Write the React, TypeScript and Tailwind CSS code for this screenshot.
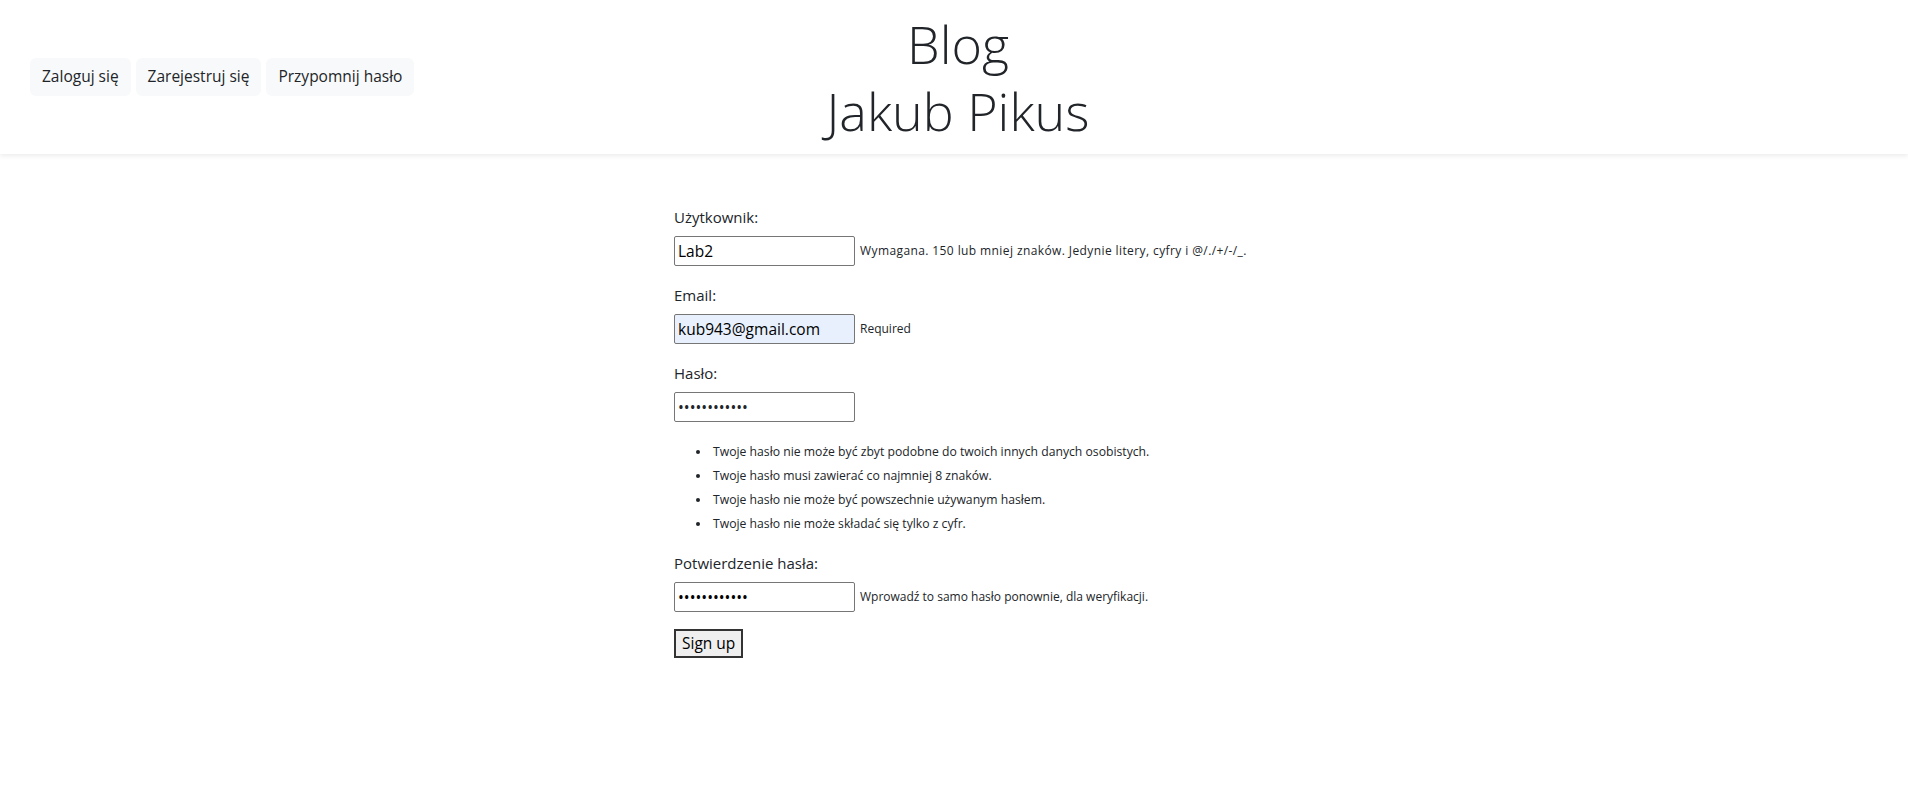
import React from 'react'

const font = { fontFamily: '"Open Sans", "Noto Sans", sans-serif' }

const rules = [
    'Twoje hasło nie może być zbyt podobne do twoich innych danych osobistych.',
    'Twoje hasło musi zawierać co najmniej 8 znaków.',
    'Twoje hasło nie może być powszechnie używanym hasłem.',
    'Twoje hasło nie może składać się tylko z cyfr.',
]

function Field({ label, value, type = 'text', help, helpClass = '', autofill }: { label: string; value: string; type?: string; help?: string; helpClass?: string; autofill?: boolean }) {
    return (
        <div className="mb-[17px]">
            <div className="text-[15px] leading-6 text-[#212529]">{label}</div>
            <div className="mt-[7px] flex items-center">
                <input
                    readOnly
                    type={type}
                    value={value}
                    className={`h-[30px] w-[181px] shrink-0 border border-[#767676] rounded-[2px] px-[3px] text-[15.5px] text-black outline-none ${autofill ? 'bg-[#e8f0fe]' : 'bg-white'}`}
                />
                {help && <span className={`ml-[5px] whitespace-nowrap text-[12px] text-[#212529] ${helpClass}`}>{help}</span>}
            </div>
        </div>
    )
}

export default function App() {
    return (
        <div className="min-h-screen bg-white text-[#212529]" style={font}>
            <header className="h-[154px] bg-white shadow-[0_2px_5px_rgba(0,0,0,0.08)] grid grid-cols-[1fr_auto_1fr] items-center px-[30px]">
                <nav className="flex gap-[5px]">
                    {['Zaloguj się', 'Zarejestruj się', 'Przypomnij hasło'].map((t) => (
                        <button key={t} className="h-[38px] px-3 rounded-[6px] bg-[#f8f9fa] text-[15.5px] text-[#212529]">
                            {t}
                        </button>
                    ))}
                </nav>
                <h1 className="text-center text-[52px] font-light leading-[67px] text-[#212529] ml-[8px]">
                    Blog
                    <br />
                    Jakub Pikus
                </h1>
                <div />
            </header>

            <main className="w-[560px] mx-auto pt-[51px]">
                <Field
                    label="Użytkownik:"
                    value="Lab2"
                    help="Wymagana. 150 lub mniej znaków. Jedynie litery, cyfry i @/./+/-/_."
                    helpClass="tracking-[0.4px]"
                />
                <Field label="Email:" value="kub943@gmail.com" help="Required" autofill />
                <div className="mb-[18px]">
                    <div className="text-[15px] leading-6">Hasło:</div>
                    <div className="mt-[7px]">
                        <input readOnly type="password" value="Lab2password" className="h-[30px] w-[181px] border border-[#767676] rounded-[2px] px-[3px] text-[15.5px] outline-none" />
                    </div>
                    <ul className="mt-[20px] ml-[37px] list-disc text-[12.2px] space-y-[5px]">
                        {rules.map((r) => (
                            <li key={r} className="leading-[19px] pl-[2px]">{r}</li>
                        ))}
                    </ul>
                </div>
                <Field label="Potwierdzenie hasła:" value="Lab2password" type="password" help="Wprowadź to samo hasło ponownie, dla weryfikacji." />
                <button className="mt-0 h-[29px] px-[6px] bg-[#efefef] border-2 border-[#333] text-[15.5px] text-black">Sign up</button>
            </main>
        </div>
    )
}
